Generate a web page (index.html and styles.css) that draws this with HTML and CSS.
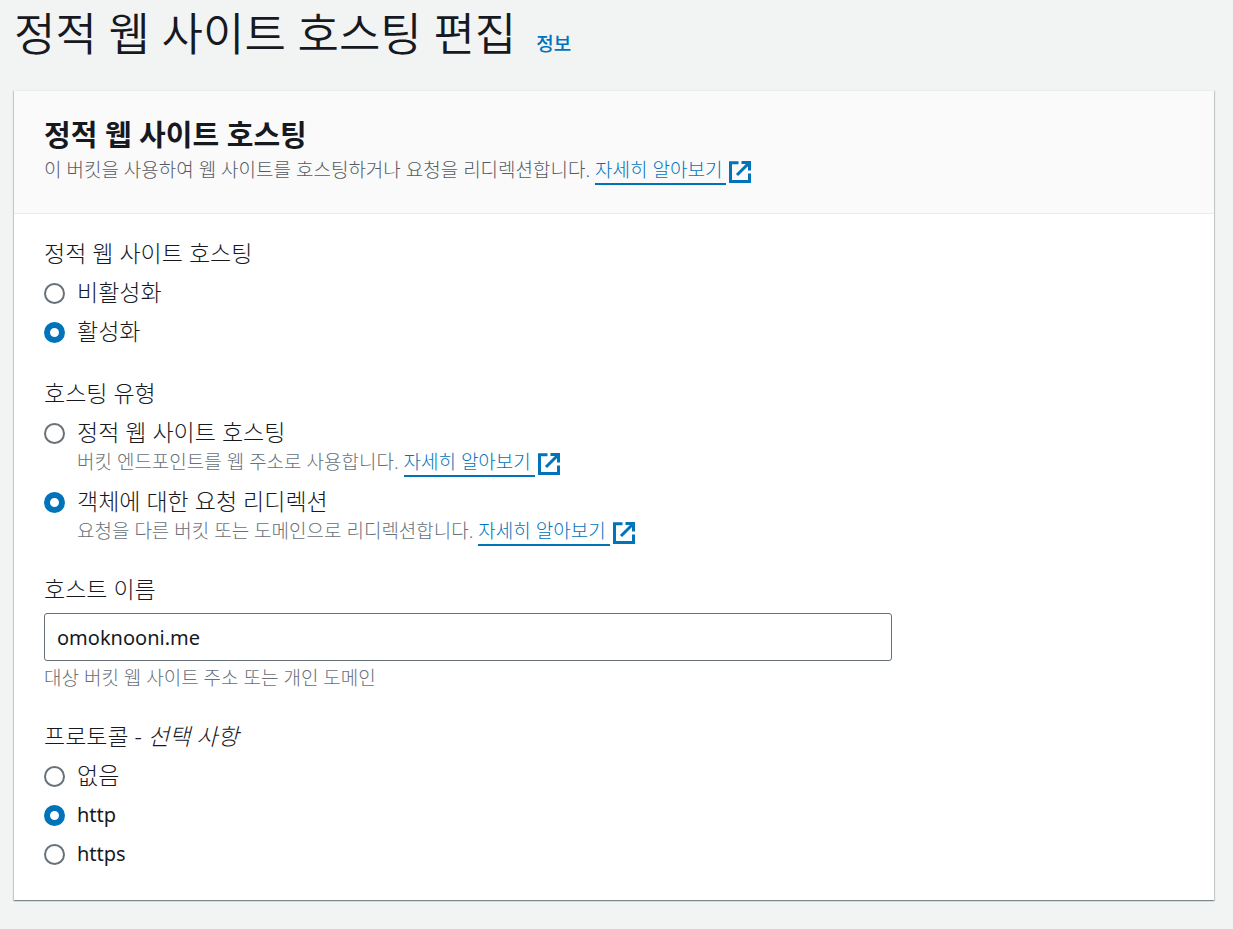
FILE: index.html
```html
<!DOCTYPE html>
<html lang="ko">

<head>
  <meta charset="utf-8">
  <title>정적 웹 사이트 호스팅 편집</title>
  <meta name="viewport" content="width=device-width,initial-scale=1">
  <link rel="stylesheet" href="styles.css">
</head>

<body>
  <svg class="sprite" aria-hidden="true">
    <symbol id="external" viewBox="0 0 22 22">
      <path d="M9.500 1.800H1.500V20.500H20.500V12.500M12.500 1.500H20.500V9.500M20.500 1.500L8 14" fill="none" stroke="currentColor" stroke-width="3" />
    </symbol>
  </svg>

  <header class="page-header">
    <h1>정적 웹 사이트 호스팅 편집</h1>
    <a href="#" class="info">정보</a>
  </header>

  <main class="card">
    <header class="card-header">
      <h2>정적 웹 사이트 호스팅</h2>
      <p>이 버킷을 사용하여 웹 사이트를 호스팅하거나 요청을 리디렉션합니다. <a href="#" class="external"><span>자세히 알아보기</span><svg><use href="#external" /></svg></a></p>
    </header>

    <form class="card-body">
      <fieldset>
        <legend>정적 웹 사이트 호스팅</legend>
        <div class="option">
          <input type="radio" name="hosting" id="hosting-off">
          <label for="hosting-off">비활성화</label>
        </div>
        <div class="option">
          <input type="radio" name="hosting" id="hosting-on" checked>
          <label for="hosting-on">활성화</label>
        </div>
      </fieldset>

      <fieldset>
        <legend>호스팅 유형</legend>
        <div class="option">
          <input type="radio" name="type" id="type-static">
          <label for="type-static">정적 웹 사이트 호스팅</label>
          <p>버킷 엔드포인트를 웹 주소로 사용합니다. <a href="#" class="external"><span>자세히 알아보기</span><svg><use href="#external" /></svg></a></p>
        </div>
        <div class="option spaced">
          <input type="radio" name="type" id="type-redirect" checked>
          <label for="type-redirect">객체에 대한 요청 리디렉션</label>
          <p>요청을 다른 버킷 또는 도메인으로 리디렉션합니다. <a href="#" class="external"><span>자세히 알아보기</span><svg><use href="#external" /></svg></a></p>
        </div>
      </fieldset>

      <div class="field">
        <label for="host">호스트 이름</label>
        <input type="text" id="host" value="omoknooni.me">
        <p>대상 버킷 웹 사이트 주소 또는 개인 도메인</p>
      </div>

      <fieldset>
        <legend>프로토콜 - <em>선택 사항</em></legend>
        <div class="option">
          <input type="radio" name="protocol" id="protocol-none">
          <label for="protocol-none">없음</label>
        </div>
        <div class="option">
          <input type="radio" name="protocol" id="protocol-http" checked>
          <label for="protocol-http" class="latin">http</label>
        </div>
        <div class="option">
          <input type="radio" name="protocol" id="protocol-https">
          <label for="protocol-https" class="latin">https</label>
        </div>
      </fieldset>
    </form>
  </main>
</body>

</html>
```
FILE: styles.css
```css
* {
  box-sizing: border-box;
}

body {
  margin: 0;
  padding: 0 19px 27px 14px;
  background: #f2f3f3;
  color: #16191f;
  font-family: "Noto Sans", "Noto Sans CJK KR", sans-serif;
  font-size: 23px;
  font-weight: 300;
  line-height: 33px;
}

h1,
h2,
p {
  margin: 0;
}

a {
  color: #0073bb;
  text-decoration: none;
}

.sprite {
  display: none;
}

.page-header {
  display: flex;
  align-items: baseline;
  gap: 20px;
  margin-bottom: 22px;
}

h1 {
  font-size: 45px;
  font-weight: 350;
  line-height: 68px;
}

.info {
  font-size: 19px;
  font-weight: 500;
}

.card {
  background: #fff;
  border-top: 1px solid #eaeded;
  box-shadow: 0 1px 1px 0 rgba(0, 28, 36, .3), 1px 1px 1px 0 rgba(0, 28, 36, .15), -1px 1px 1px 0 rgba(0, 28, 36, .15);
}

.card-header {
  padding: 24px 30px 30px;
  background: #fafafa;
  border-bottom: 1px solid #eaeded;
}

h2 {
  font-size: 29px;
  font-weight: 700;
  line-height: 40px;
}

.card-header p,
.option p,
.field p {
  color: #687078;
  font-size: 19px;
  line-height: 26px;
}

.card-header p {
  padding-top: 2px;
  color: #545b64;
}

.external span {
  padding-right: 4px;
  border-bottom: 2px solid #0073bb;
}

.external svg {
  width: 22px;
  height: 22px;
  margin-left: 3px;
  vertical-align: -6px;
}

.card-body {
  display: flex;
  flex-direction: column;
  gap: 29px;
  padding: 23px 30px 30px;
}

fieldset {
  margin: 0;
  padding: 0;
  border: 0;
  min-width: 0;
}

legend {
  padding: 0;
}

.option {
  display: grid;
  grid-template-columns: 21px 1fr;
  column-gap: 12px;
  align-items: center;
  margin-top: 6px;
}

.option.spaced {
  margin-top: 10px;
}

.option p {
  grid-column: 2;
}

input[type="radio"] {
  appearance: none;
  width: 21px;
  height: 21px;
  margin: 2px 0 0;
  background: #fff;
  border: 2px solid #687078;
  border-radius: 50%;
}

input[type="radio"]:checked {
  border: 6px solid #0073bb;
}

.field {
  display: flex;
  flex-direction: column;
}

input[type="text"] {
  width: 848px;
  max-width: 100%;
  height: 48px;
  margin: 7px 0 4px;
  padding: 0 12px;
  background: #fff;
  color: #16191f;
  border: 1px solid #687078;
  border-radius: 3px;
  font: inherit;
  font-size: 20px;
  font-weight: 400;
}

.latin {
  font-size: 20px;
  font-weight: 400;
}
```
